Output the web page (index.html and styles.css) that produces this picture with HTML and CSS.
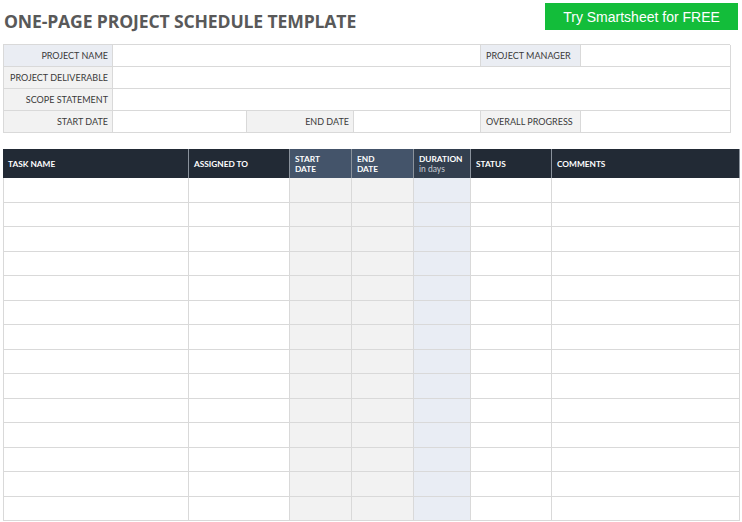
FILE: index.html
```html
<!DOCTYPE html>
<html>
<head>
<meta charset="utf-8">
<link rel="stylesheet" href="styles.css">
</head>
<body>
<div class="page">
  <header class="top">
    <h1 class="title">ONE-PAGE PROJECT SCHEDULE TEMPLATE</h1>
    <a class="cta" href="#">Try Smartsheet for FREE</a>
  </header>

  <section class="info">
    <div class="lbl blue">PROJECT NAME</div>
    <div class="val span3"></div>
    <div class="lbl blue left">PROJECT MANAGER</div>
    <div class="val"></div>

    <div class="lbl">PROJECT DELIVERABLE</div>
    <div class="val span5"></div>

    <div class="lbl">SCOPE STATEMENT</div>
    <div class="val span5"></div>

    <div class="lbl">START DATE</div>
    <div class="val"></div>
    <div class="lbl">END DATE</div>
    <div class="val"></div>
    <div class="lbl left">OVERALL PROGRESS</div>
    <div class="val"></div>
  </section>

  <section class="tasks" id="tasks">
    <div class="th">TASK NAME</div>
    <div class="th">ASSIGNED TO</div>
    <div class="th mid">START<br>DATE</div>
    <div class="th mid">END<br>DATE</div>
    <div class="th dur">DURATION<br><span class="sub">in days</span></div>
    <div class="th">STATUS</div>
    <div class="th">COMMENTS</div>
  </section>
</div>
<script src="script.js"></script>
</body>
</html>
```

FILE: script.js
```js
const t = document.getElementById('tasks');
const cls = ['', '', 'g', 'g', 'b', '', ''];
for (let r = 0; r < 14; r++) {
  for (let c = 0; c < 7; c++) {
    const d = document.createElement('div');
    d.className = 'td' + (cls[c] ? ' ' + cls[c] : '');
    t.appendChild(d);
  }
}
```

FILE: styles.css
```css
* { box-sizing: border-box; }
html, body { margin: 0; padding: 0; background: #fff; }
body { font-family: "Liberation Sans", Arial, sans-serif; }

.page { width: 742px; height: 522px; padding: 0 0 0 3px; }

.top {
  display: flex;
  justify-content: space-between;
  align-items: flex-start;
  height: 44px;
  padding-top: 3px;
  padding-right: 4px;
}
.title {
  margin: 8px 0 0 1px;
  font-family: "Open Sans", "DejaVu Sans", sans-serif;
  font-weight: 700;
  font-size: 17.6px;
  letter-spacing: -0.15px;
  color: #595959;
  line-height: 20px;
}
.cta {
  display: flex;
  align-items: center;
  justify-content: center;
  width: 193px;
  height: 27px;
  background: #13bd3a;
  color: #fff;
  text-decoration: none;
  font-family: "Liberation Sans", Arial, sans-serif;
  font-size: 14px;
}

.info {
  display: grid;
  grid-template-columns: 109px 134px 107px 127px 100px 150px;
  grid-auto-rows: 22px;
  width: 727px;
  border-top: 1px solid #d9d9d9;
  border-left: 1px solid #d9d9d9;
  font-family: "Lato", "Liberation Sans", sans-serif;
  font-size: 9px;
  color: #3a3a3a;
}
.info > div {
  border-right: 1px solid #d9d9d9;
  border-bottom: 1px solid #d9d9d9;
}
.lbl {
  background: #f2f2f2;
  display: flex;
  align-items: center;
  justify-content: flex-end;
  padding-right: 4px;
  white-space: nowrap;
}
.lbl.blue { background: #eaedf3; }
.lbl.left { justify-content: flex-start; padding-left: 5px; }
.val { background: #fff; }
.span3 { grid-column: span 3; }
.span5 { grid-column: span 5; }

.tasks {
  margin-top: 16px;
  display: grid;
  grid-template-columns: 186px 101px 62px 62px 57px 81px 188px;
  grid-template-rows: 29px repeat(14, 24.5px);
  width: 737px;
  font-family: "Lato", "Liberation Sans", sans-serif;
}
.th {
  background: #222a35;
  color: #fff;
  font-weight: 700;
  font-size: 8.3px;
  line-height: 10px;
  display: flex;
  flex-direction: column;
  justify-content: center;
  padding-left: 5px;
  border-right: 1px solid #8a929c;
  white-space: nowrap;
}
.th:last-child { border-right: 0; }
.th.mid { background: #44546a; }
.th.dur { background: #333f4f; }
.th .sub { font-weight: 400; color: #c9ced6; font-size: 8.5px; }

.td {
  border-right: 1px solid #d9d9d9;
  border-bottom: 1px solid #d9d9d9;
  background: #fff;
}
.td:nth-child(7n+1) { border-left: 1px solid #d9d9d9; }
.td.g { background: #f2f2f2; }
.td.b { background: #e9edf4; }
```
